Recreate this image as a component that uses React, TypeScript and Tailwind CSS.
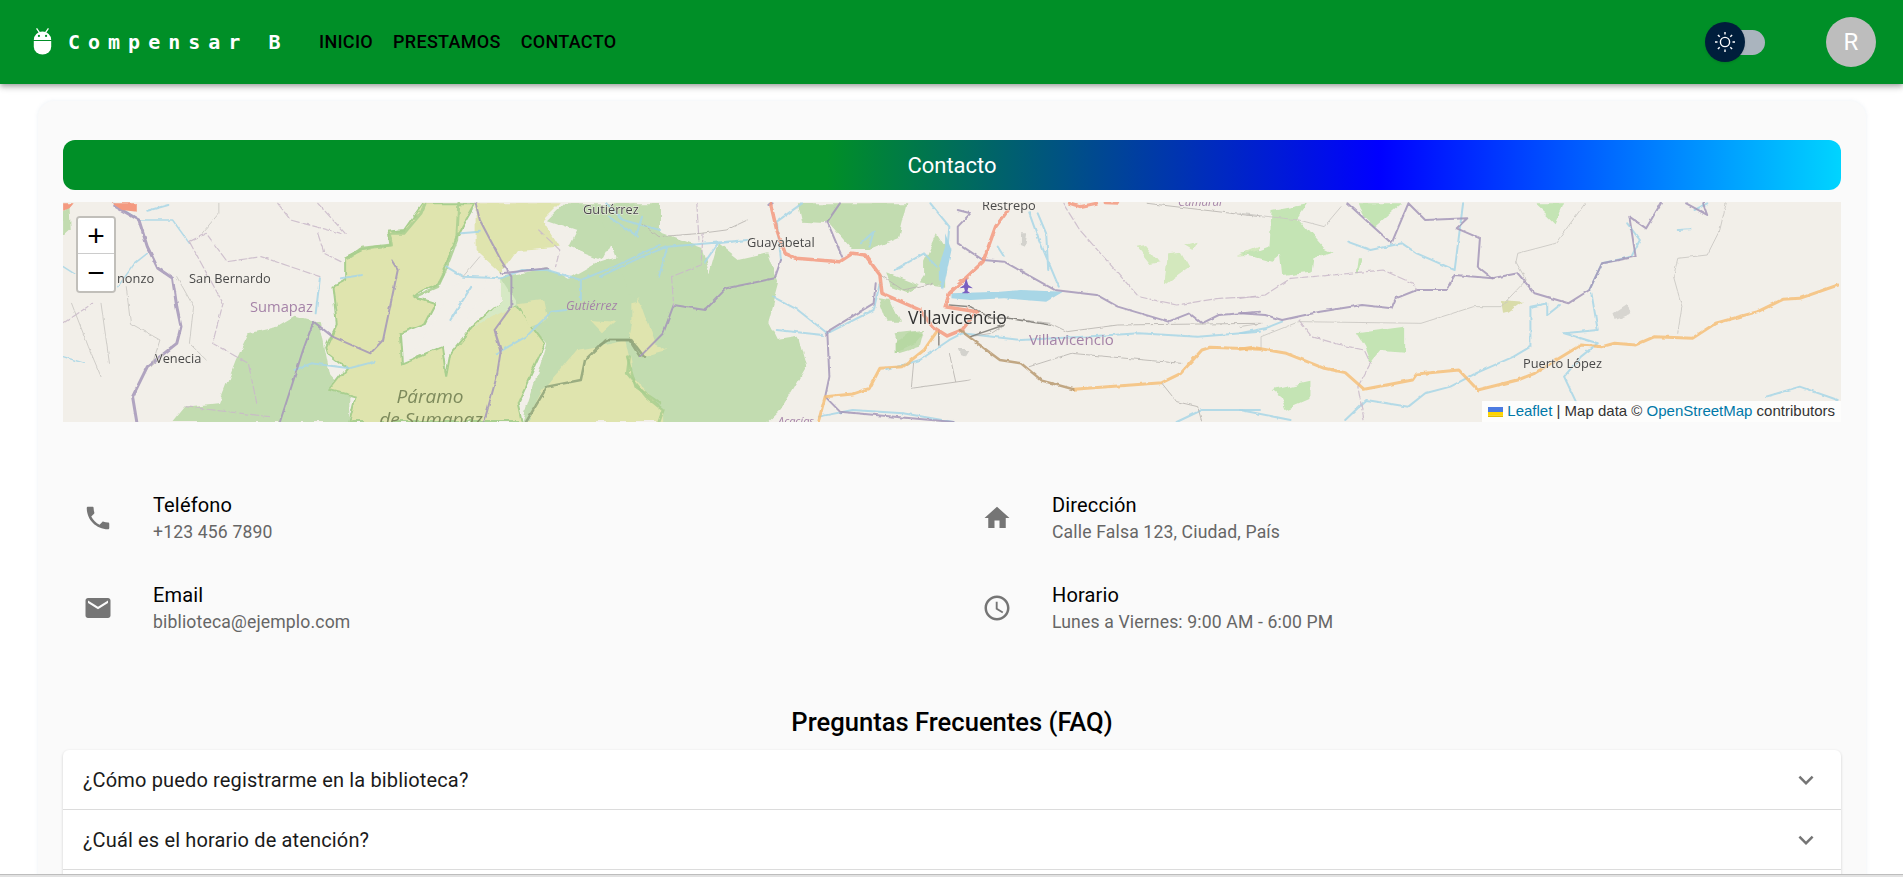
import React from "react";

const Z1 = "translate(0,190) scale(0.4209,0.3333)";
const Z2 = "translate(600,190) scale(0.4209,0.3333)";
const Z3 = "translate(1240,190) scale(0.4209,0.3333)";

function Line({ d, c, w = 1.5, dash }: { d: string; c: string; w?: number; dash?: string }) {
  return <path d={d} fill="none" stroke={c} strokeWidth={w} strokeOpacity={0.85} strokeDasharray={dash} strokeLinejoin="round" strokeLinecap="round" vectorEffect="non-scaling-stroke" />;
}

const G = "#c2dcb0";
const Y = "#dfe4ae";
const GE = "#a9cf8f";
const R = "#a8d6e6";
const B = "#a596b8";
const P = "#c9b9c9";
const GR = "#c9c7c2";
const O = "#f6c07a";
const RD = "#f49a80";

function MapArt() {
  return (
    <svg viewBox="63 202 1778 220" className="block w-full h-full" preserveAspectRatio="none">
      <defs>
        <filter id="soft" x="0" y="0" width="100%" height="100%">
          <feTurbulence type="fractalNoise" baseFrequency="0.07" numOctaves="2" seed="4" result="n" />
          <feDisplacementMap in="SourceGraphic" in2="n" scale="7" xChannelSelector="R" yChannelSelector="G" result="d" />
          <feGaussianBlur in="d" stdDeviation="0.6" />
        </filter>
        <filter id="softline" x="0" y="0" width="100%" height="100%">
          <feTurbulence type="fractalNoise" baseFrequency="0.18" numOctaves="1" seed="9" result="n" />
          <feDisplacementMap in="SourceGraphic" in2="n" scale="3" xChannelSelector="R" yChannelSelector="G" result="d" />
          <feGaussianBlur in="d" stdDeviation="0.45" />
        </filter>
        <filter id="softtext" x="0" y="0" width="100%" height="100%">
          <feGaussianBlur stdDeviation="0.3" />
        </filter>
      </defs>
      <rect x="63" y="202" width="1778" height="220" fill="#f2efe9" />
      <g filter="url(#soft)">
        <g transform={Z1}>
          <path fill={G} d="M150,60 L165,45 L168,120 L150,140 Z M410,696 L440,650 L520,640 L560,510 L590,430 L660,410 L700,380 L745,395 L760,400 L785,560 L830,620 L830,696 Z" />
          <path fill={G} d="M1190,260 L1300,235 L1350,270 L1420,220 L1568,160 L1568,696 L1240,696 L1300,460 L1200,330 Z M1340,40 L1568,40 L1568,120 L1480,90 L1430,210 L1350,170 L1370,120 L1300,90 Z" />
          <path fill={Y} stroke={GE} strokeWidth="2" vectorEffect="non-scaling-stroke" d="M775,470 L800,400 L790,290 L820,270 L820,205 L860,180 L930,165 L925,125 L960,120 L1005,40 L1080,40 L1130,40 L1080,150 L1060,230 L1040,280 L985,320 L1035,340 L1010,400 L950,430 L955,520 L1050,470 L1060,560 L1070,490 L1125,405 L1190,335 L1230,350 L1295,460 L1230,640 L1240,696 L830,696 L845,620 L785,600 L825,535 L780,490 Z" />
          <path fill={Y} d="M1130,40 L1330,40 L1290,90 L1330,170 L1230,180 L1190,250 L1130,180 Z M1370,480 L1500,450 L1510,560 L1568,640 L1568,696 L1250,696 L1290,600 Z M1500,340 L1568,320 L1568,430 L1500,420 Z M1230,340 L1290,330 L1300,390 L1260,410 Z M1400,390 L1460,395 L1430,430 Z" />
          <path fill="#f2efe9" d="M1060,295 L1170,240 L1140,320 L1070,460 L1000,490 L975,495 L1020,420 L1055,345 Z" />
          <path fill="#d6e9c4" d="M1190,260 L1230,340 L1130,410 L1190,330 Z" />
        </g>
        <g transform={Z2}>
          <path fill={G} d="M0,70 L80,40 L100,50 L110,90 L150,130 L240,170 L260,250 L280,160 L330,210 L400,190 L425,280 L400,400 L420,450 L470,440 L490,530 L430,660 L400,696 L0,696 L0,480 L60,440 L100,340 L70,320 Z" />
          <path fill={G} d="M470,40 L730,40 L710,145 L640,180 L600,180 L545,100 L480,95 Z M660,325 L690,330 L715,395 L680,395 Z M700,430 L770,420 L760,470 L710,490 Z M770,215 L800,130 L820,170 L820,290 L760,280 L770,260 Z M680,250 L760,290 L730,310 L690,290 Z" />
          <path fill="#d3e8bd" d="M1275,170 L1295,165 L1330,220 L1310,225 Z M1350,190 L1380,185 L1400,230 L1340,285 Z M1390,165 L1420,155 L1410,180 Z M1510,200 L1568,170 L1568,195 Z" />
          <path fill={Y} d="M90,320 L130,460 L160,480 L100,500 L70,440 Z M0,470 L60,450 L80,560 L150,660 L150,696 L0,696 Z" />
          <path d="M700,460 L740,425 L770,430 L750,460 L700,490 Z" fill="#b7d8a3" />
          <path fill="#d3d2cd" d="M850,480 L875,480 L865,500 L855,495 Z M1000,130 L1015,130 L1010,170 L1000,165 Z" />
        </g>
        <g transform={Z3}>
          <path fill="#c4e4b4" d="M75,60 L160,40 L135,85 L195,170 L220,185 L175,205 L170,245 L100,255 L95,195 L75,215 L15,195 L70,170 Z M700,40 L770,40 L750,100 L730,75 Z M280,40 L385,40 L320,110 L290,75 Z M275,430 L390,410 L390,485 L335,480 L310,520 L295,470 Z M75,600 L165,575 L165,630 L110,660 L100,625 Z M0,190 L15,190 L15,200 Z M280,205 L290,205 L280,250 L275,250 Z" />
          <path fill="#d9dcaa" d="M620,330 L675,335 L640,365 L625,368 Z" />
          <path fill="#d7d5d0" d="M885,370 L915,345 L930,370 L890,390 Z" />
        </g>
      </g>
      <g filter="url(#softline)">
        <g transform={Z1}>
          <Line c={GE} w={3} d="M1010,40 L1000,70 L960,130 L925,130 L930,165 L860,175 L825,205" />
          <Line c={GE} w={3} d="M1090,40 L1085,150 L1055,250 L1040,290 L985,320" />
          <Line c="#8fa37a" w={2.5} d="M1250,696 L1300,590 L1380,570 L1390,510 L1440,450 L1500,450 L1530,500" />
          <Line c={GE} w={2.5} d="M1490,500 L1510,590 L1568,640" />
          <Line c={R} w={1.5} d="M270,40 L330,90 L410,90 L450,160 M280,290 L320,220 L350,190 M150,230 L175,250 M150,500 L200,520" />
          <Line c={R} w={2} d="M350,62 L400,45 M760,265 L750,370 M810,265 L860,255 M1060,230 L1100,260 L1190,265 L1240,240 L1300,240 L1380,270 L1460,230 L1568,165 M1070,390 L1120,290 M1380,270 L1380,330 M1180,490 L1250,440 L1310,365 L1345,360 M700,540 L740,520 L830,535 L890,515 M1095,130 L1140,125 M1440,40 L1480,90 L1568,120 " />
          <Line c={B} w={3} d="M275,50 L330,90 L350,170 L375,235 L410,265 L420,350 L430,410 L420,460 L350,530 L315,620 L325,696" />
          <Line c={B} w={2} d="M745,395 L720,480 L695,580 L665,696 M745,395 L790,440 L880,490 L910,450 L945,240 L930,210 M1130,40 L1140,90 L1190,210 L1215,260 L1215,350 L1175,420 L1190,480 L1180,560 L1150,696 M1190,250 L1300,235 M1190,490 L1175,420" />
          <Line c={P} w={1.2} dash="8 3" d="M660,40 L690,90 L810,130 M755,40 L820,130 M755,130 L770,190 L810,215 M450,155 L490,130 L540,215 L620,200 L760,260 M450,155 L530,340 L505,460 L590,520 L610,640 M150,400 L220,340 M1280,120 L1330,180 L1320,230 M440,650 L640,680" />
          <Line c={GR} w={1} d="M520,40 L520,70 L480,130 M300,290 L310,400 L380,450 L360,530 M240,340 L260,520 M420,260 L460,350 L450,460 L490,510 M1100,260 L1140,200 M170,340 L210,470 L240,560" />
          <path fill="#f49a80" d="M265,40 L325,40 L325,65 L290,60 Z M150,40 L175,40 L165,55 L150,62 Z" />
        </g>
        <g transform={Z2}>
          <Line c="#8fa37a" w={2.5} d="M0,465 L20,450 L70,450 L95,500" />
          <Line c={GE} w={3} d="M70,500 L65,550 L110,620 L150,660 L140,696" />
          <Line c={R} w={2} d="M0,260 L100,200 L160,170 L350,150 M20,80 L90,140 M100,80 L85,140 M140,260 L160,170 M250,215 L280,160 L350,150 M430,210 L420,95 L480,40 M620,160 L650,125 L640,170 M410,320 L470,360 L540,430 L650,360 L665,280 M420,420 L530,435 M700,240 L770,190 L800,230 M785,40 L830,110 L825,180 M1020,70 L1040,140 L1090,290 M945,170 L960,200 M1040,70 L1060,130 L1065,240" />
          <path fill={R} d="M820,130 L835,180 L825,240 L815,300 L805,270 L805,230 L820,170 Z M835,310 L950,305 L1000,300 L1100,305 L1060,335 L960,325 L880,330 L835,325 Z" />
          <Line c={R} w={2} d="M830,450 L860,430 L1000,450 L1150,440 L1280,430 L1420,440 L1568,425 M680,540 L760,510 L830,450 M520,680 L600,660 L720,670 L840,696 M1370,696 L1430,660 L1568,660" />
          <Line c={B} w={2} d="M570,40 L540,95 L575,200 M415,265 L300,295 L250,360 L175,345 L150,430 L95,500 M430,210 L415,265 M410,40 L400,45 M850,60 L880,70 L850,110 L850,160 L910,210 L960,215 L1080,300 L1180,315 L1230,350 L1350,395 L1400,370 L1430,400 L1470,375 L1568,365" />
          <Line c={B} w={2} d="M655,280 L650,340 L540,425 L545,560 L535,620 L570,665 L700,680 L840,696" />
          <Line c={P} w={1.2} dash="8 3" d="M1100,40 L1140,120 L1210,220 L1280,320 L1370,345 L1470,325 L1568,320 M175,345 L170,260 L240,225 L245,130 M230,40 L235,150" />
          <Line c="#b9b5b0" w={1} d="M100,100 L140,140 L240,130 L300,120 L350,90 M660,250 L720,300 L790,280 M1300,40 L1568,80 M970,385 L1070,400 L1110,425 L1230,405 L1568,400 M1020,530 L1120,490 L1380,520 M880,440 L930,430 L960,405 M740,595 L880,570 M745,520 L740,590 M830,490 L845,575 M1335,580 L1370,635 L1420,650 L1430,696" />
          <Line c="#7d7a74" w={1.5} d="M830,345 L880,350 L930,385 L970,385 L1070,405 M805,420 L805,465 M960,405 L880,440" />
          <Line c={RD} w={3.5} d="M405,40 L420,120 L440,190 L465,205 L570,215 L600,190 L630,195 L665,255 L670,310 L760,360 L790,410 L825,438 L860,420 L895,365 L820,350 L830,310 L910,215 L940,110 L970,60" />
          <Line c={RD} w={3} d="M1115,40 L1140,50 L1180,40 M1200,38 L1230,40" />
          <Line c={O} w={3} d="M800,425 L770,480 L720,530 L665,535 L640,595 L600,612 L535,620 L520,690" />
          <Line c={O} w={3} d="M1125,598 L1335,578 L1380,550 L1430,480 L1450,472 L1568,478" />
          <Line c="#b89a72" w={2.5} d="M855,420 L950,510 L1000,520 L1050,572 L1125,598" />
        </g>
        <g transform={Z3}>
          <Line c={R} w={2} d="M255,155 L310,180 L385,160 L420,190 L510,240 L530,40 M690,350 L690,470 L650,500 L560,550 L500,590 L440,610 L400,650 L300,630 L250,690 M690,350 L730,340 L730,375 L760,345 M835,310 L850,420 L770,430 L850,460 L810,500 L770,560 L800,640 M0,430 L60,415 L100,395 M0,660 L120,690 M1250,620 L1330,590 L1420,630 M920,100 L950,150 L930,200 L860,220 L830,300 M1040,120 L1070,118 M1110,40 L1080,60" />
          <Line c={B} w={2} d="M255,40 L360,160 L400,40 M400,40 L440,90 L540,85 L515,115 L570,145 L565,230 L600,265 L660,250 L700,310 L780,340 L830,300 L860,220 L940,200 L925,80 L965,115 L1000,40 M1060,40 L1110,75 L1100,40" />
          <Line c={B} w={2} d="M0,370 L60,375 L100,390 L190,365 L290,345 L360,355 L370,325 L420,300 L490,300 L510,255 L600,265" />
          <Line c={P} w={1.2} dash="8 3" d="M0,325 L60,315 L120,265 L220,255 L340,240 L410,280 L420,300 M140,390 L170,440 L240,465 L295,480 L310,520 L280,590 L295,696" />
          <Line c={GR} w={1} d="M0,70 L140,90 L200,110 L240,50 M655,220 L660,190 L750,160 L820,40 M655,215 L680,270 L620,350 L555,350 L430,400 L140,395 L50,440 L50,480 M1040,430 L1050,350 L1030,260 L1040,205 L1110,195 L1140,120 L1155,40 M0,410 L50,400" />
          <Line c={O} w={3} d="M0,478 L30,472 L110,490 L200,535 L250,548 L295,598 L410,570 L420,552 L520,540 L565,600 L660,570 L700,550 L810,465 L860,470 L890,460 L940,465 L985,440 L1075,445 L1130,400 L1230,365 L1290,328 L1330,325 L1421,285" />
        </g>
      </g>
      <g transform={Z2}>
        <path fill="#7a5fc0" d="M870,265 L875,285 L886,295 L875,293 L873,303 L880,310 L860,310 L867,303 L865,293 L854,295 L865,285 Z" />
      </g>
      <g filter="url(#softtext)" fontFamily="'Open Sans', sans-serif" fill="#4a4a4a" fontSize="12.8" stroke="#f2efe9" strokeWidth="1" paintOrder="stroke">
        <text x="583" y="214">Gutiérrez</text>
        <text x="747" y="247">Guayabetal</text>
        <text x="982" y="210">Restrepo</text>
        <text x="189" y="283">San Bernardo</text>
        <text x="117" y="283">nonzo</text>
        <text x="155" y="363">Venecia</text>
        <text x="1523" y="368">Puerto López</text>
        <text x="908" y="324" fontSize="17.5" fill="#333">Villavicencio</text>
        <g fill="#a583a8" stroke="none">
          <text x="250" y="312" fontSize="14.7">Sumapaz</text>
          <text x="1029" y="345" fontSize="15">Villavicencio</text>
          <text x="566" y="310" fontSize="12.6" fontStyle="italic">Gutiérrez</text>
          <text x="778" y="425" fontSize="11" fontStyle="italic">Acacías</text>
          <text x="1178" y="206" fontSize="11.5" fontStyle="italic">Cumaral</text>
        </g>
        <g fill="#7d8a5c" stroke="none" fontStyle="italic" fontSize="19" textAnchor="middle">
          <text x="430" y="403">Páramo</text>
          <text x="431" y="426">de Sumapaz</text>
        </g>
      </g>
    </svg>
  );
}

function MuiIcon({ d, className }: { d: string; className: string }) {
  return (
    <svg viewBox="0 0 24 24" className={className} fill="currentColor">
      <path d={d} />
    </svg>
  );
}

const items = [
  { t: "Teléfono", s: "+123 456 7890", d: "M6.62 10.79c1.44 2.83 3.76 5.14 6.59 6.59l2.2-2.2c.27-.27.67-.36 1.02-.24 1.12.37 2.33.57 3.57.57.55 0 1 .45 1 1V20c0 .55-.45 1-1 1-9.39 0-17-7.61-17-17 0-.55.45-1 1-1h3.5c.55 0 1 .45 1 1 0 1.25.2 2.45.57 3.57.11.35.03.74-.25 1.02l-2.2 2.2z" },
  { t: "Dirección", s: "Calle Falsa 123, Ciudad, País", d: "M10 20v-6h4v6h5v-8h3L12 3 2 12h3v8z" },
  { t: "Email", s: "biblioteca@ejemplo.com", d: "M20 4H4c-1.1 0-1.99.9-1.99 2L2 18c0 1.1.9 2 2 2h16c1.1 0 2-.9 2-2V6c0-1.1-.9-2-2-2zm0 4-8 5-8-5V6l8 5 8-5v2z" },
  { t: "Horario", s: "Lunes a Viernes: 9:00 AM - 6:00 PM", d: "M11.99 2C6.47 2 2 6.48 2 12s4.47 10 9.99 10C17.52 22 22 17.52 22 12S17.52 2 11.99 2zM12 20c-4.42 0-8-3.58-8-8s3.58-8 8-8 8 3.58 8 8-3.58 8-8 8zm.5-13H11v6l5.25 3.15.75-1.23-4.5-2.67z" },
];

export default function App() {
  return (
    <div className="h-[877px] overflow-hidden bg-white font-['Roboto',sans-serif] relative">
      <header className="h-[84px] bg-[#008f27] shadow-[0_2px_4px_-1px_rgba(0,0,0,0.2),0_4px_5px_0_rgba(0,0,0,0.14),0_1px_10px_0_rgba(0,0,0,0.12)] flex items-center pl-[33px] pr-[27px] relative z-10">
        <svg viewBox="0 0 24 34" className="w-[19px] h-[27px] text-white mr-[16px] -mt-px" fill="currentColor">
          <path d="M1 16.5 h22 v7 a11 10 0 0 1 -22 0z" />
          <path d="M1 15 a11 10.5 0 0 1 22 0z" />
          <path d="M4.5 0.5 L8 5.5 M19.5 0.5 L16 5.5" stroke="currentColor" strokeWidth="1.6" />
          <circle cx="7.5" cy="10" r="1.4" fill="#008f27" />
          <circle cx="16.5" cy="10" r="1.4" fill="#008f27" />
        </svg>
        <span className="font-['DejaVu_Sans_Mono',monospace] font-bold text-[20px] tracking-[8px] text-white w-[251px] whitespace-pre">Compensar B</span>
        <nav className="flex gap-[20px] text-[18px] tracking-[0.3px] font-medium text-black uppercase -mt-[2px]">
          <span>Inicio</span>
          <span>Prestamos</span>
          <span>Contacto</span>
        </nav>
        <div className="ml-auto relative w-[60px] h-[40px] mr-[61px]">
          <div className="absolute right-0 top-[7.5px] h-[25px] w-[55px] rounded-full bg-[#aab4be]" />
          <div className="absolute left-0 top-0 w-[40px] h-[40px] rounded-full bg-[#001e3c] flex items-center justify-center shadow-sm">
            <svg viewBox="0 0 24 24" className="w-[24px] h-[24px]" fill="none" stroke="#fff" strokeWidth="1.4">
              <circle cx="12" cy="12" r="4.6" />
              <path d="M12 2v2.5M12 19.5V22M2 12h2.5M19.5 12H22M4.9 4.9l1.8 1.8M17.3 17.3l1.8 1.8M4.9 19.1l1.8-1.8M17.3 6.7l1.8-1.8" />
            </svg>
          </div>
        </div>
        <div className="w-[50px] h-[50px] rounded-full bg-[#bdbdbd] text-white text-[24px] flex items-center justify-center">R</div>
      </header>

      <main className="ml-[38px] mr-[37px] mt-[17px] bg-[#fafafa] rounded-t-[16px] shadow-[0_0_4px_rgba(100,130,170,0.12)] px-[25px] pt-[39px]">
        <div className="h-[50px] rounded-[12px] flex items-center justify-center text-white text-[22px] bg-[linear-gradient(90deg,#008f27_43%,#0000ff_74%,#00d4ff_100%)]">Contacto</div>

        <div className="relative mt-[12px] h-[220px] overflow-hidden">
          <MapArt />
          <div className="absolute left-[13px] top-[14px] w-[40px] rounded-[4px] border-2 border-[rgba(0,0,0,0.2)] bg-clip-padding font-['Liberation_Sans',sans-serif] text-black">
            <div className="h-[36px] bg-white rounded-t-[2px] border-b border-[#ccc] flex items-center justify-center text-[30px] leading-none">+</div>
            <div className="h-[37px] bg-white rounded-b-[2px] flex items-center justify-center text-[30px] leading-none">−</div>
          </div>
          <div className="absolute right-0 bottom-0 h-[21px] pl-[6px] pr-[6px] bg-[rgba(255,255,255,0.85)] flex items-center gap-[4px] font-['Liberation_Sans',sans-serif] text-[15px] text-[#333] whitespace-pre">
            <svg viewBox="0 0 12 8" className="w-[15px] h-[10px]">
              <rect width="12" height="4" fill="#4c7be1" />
              <rect y="4" width="12" height="3" fill="#ffd500" />
              <rect y="7" width="12" height="1" fill="#e0bc00" />
            </svg>
            <span><span className="text-[#0078a8]">Leaflet</span> | Map data © <span className="text-[#0078a8]">OpenStreetMap</span> contributors</span>
          </div>
        </div>

        <div className="grid grid-cols-[899px_1fr] pl-[20px] mt-[66px] gap-y-[30px]">
          {items.map((it) => (
            <div key={it.t} className="flex items-center h-[60px]">
              <MuiIcon d={it.d} className="w-[30px] h-[30px] text-[#757575] shrink-0 mr-[40px]" />
              <div>
                <div className="text-[20px] leading-[28px] text-black tracking-[0.15px]">{it.t}</div>
                <div className="text-[17.6px] leading-[27px] text-[#666] tracking-[0.15px]">{it.s}</div>
              </div>
            </div>
          ))}
        </div>

        <h2 className="text-center text-[25.6px] font-medium text-black mt-[66px] leading-[36px]">Preguntas Frecuentes (FAQ)</h2>

        <div className="mt-[10px] bg-white rounded-t-[6px] shadow-[0_1px_3px_rgba(0,0,0,0.18)]">
          {["¿Cómo puedo registrarme en la biblioteca?", "¿Cuál es el horario de atención?"].map((q) => (
            <div key={q} className="h-[60px] border-b border-[#dcdcdc] flex items-center justify-between pl-[20px] pr-[20px] text-[20px] tracking-[0.15px] text-[#1a1a1a]">
              <span>{q}</span>
              <svg viewBox="0 0 24 24" className="w-[30px] h-[30px] text-[#757575]" fill="currentColor">
                <path d="M16.59 8.59 12 13.17 7.41 8.59 6 10l6 6 6-6z" />
              </svg>
            </div>
          ))}
          <div className="h-[30px]" />
        </div>
      </main>

      <div className="absolute left-0 right-0 bottom-0 h-[3px] bg-[#e2e2e2] border-t border-[#bdbdbd]" />
    </div>
  );
}
